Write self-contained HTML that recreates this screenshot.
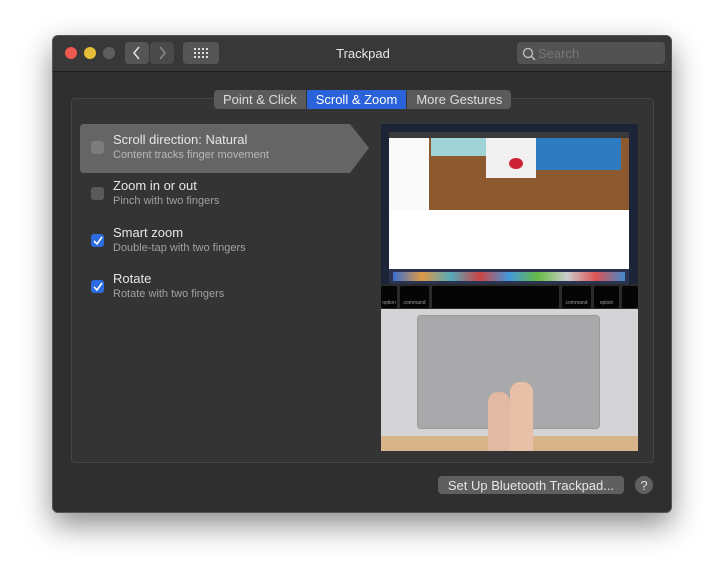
<!DOCTYPE html>
<html><head><meta charset="utf-8"><style>
*{margin:0;padding:0;box-sizing:border-box}
body{width:724px;height:582px;background:#fff;font-family:"Liberation Sans",sans-serif;position:relative;overflow:hidden}
.win{position:absolute;left:52px;top:35px;width:620px;height:478px;background:#2f2f2f;border-radius:6px;border:1px solid #555;box-shadow:0 12px 30px rgba(0,0,0,.45)}
.tb{position:absolute;left:0;top:0;width:100%;height:36px;background:#383838;border-bottom:1px solid #1e1e1e;border-radius:6px 6px 0 0}
.dot{position:absolute;top:11px;width:12px;height:12px;border-radius:50%}
.btn{position:absolute;top:6px;height:22px;background:#555;border-radius:4px}
.t{position:absolute;color:#ddd;font-size:13px}
.grp{position:absolute;left:18px;top:62px;width:583px;height:365px;background:#343434;border:1px solid #444;border-radius:4px}
.tabs{position:absolute;left:161px;top:54px;height:19px;display:flex;font-size:13px;color:#ddd;border-radius:4px;overflow:hidden}
.tabs div{padding:2px 9px 0;background:#5b5b5b;height:19px}
.tabs .on{background:#2a62d9;color:#fff;border-left:1px solid #333;border-right:1px solid #333}
.row{position:absolute;left:28px;width:290px;height:48px}
.cb{position:absolute;left:10px;top:17px;width:13px;height:13px;border-radius:3px;background:#5a5a5a}
.cb.on{background:#2d6ce0}
.h{position:absolute;left:32px;top:8px;color:#e6e6e6;font-size:13px}
.s{position:absolute;left:32px;top:25px;color:#a0a0a0;font-size:11px}
.k{position:absolute;top:162px;height:22px;background:#050505;border-radius:2px;color:#999;font-size:5px;text-align:center;padding-top:14px}
</style></head><body>
<div class="win">
 <div class="tb">
  <div class="dot" style="left:12px;background:#ee5a52"></div>
  <div class="dot" style="left:31px;background:#e6be3a"></div>
  <div class="dot" style="left:50px;background:#5e5e5e"></div>
  <div class="btn" style="left:72px;width:24px"></div>
  <div class="btn" style="left:97px;width:24px;background:#4a4a4a"></div>
  <svg style="position:absolute;left:78px;top:10px" width="12" height="14"><path d="M8 1L3 7l5 6" stroke="#ddd" stroke-width="1.6" fill="none"/></svg>
  <svg style="position:absolute;left:103px;top:10px" width="12" height="14"><path d="M4 1l5 6-5 6" stroke="#888" stroke-width="1.6" fill="none"/></svg>
  <div class="btn" style="left:130px;width:36px"></div>
  <svg style="position:absolute;left:141px;top:12px" width="14" height="10" fill="#ddd"><g><rect x="0" y="0" width="2" height="2"/><rect x="4" y="0" width="2" height="2"/><rect x="8" y="0" width="2" height="2"/><rect x="12" y="0" width="2" height="2"/><rect x="0" y="4" width="2" height="2"/><rect x="4" y="4" width="2" height="2"/><rect x="8" y="4" width="2" height="2"/><rect x="12" y="4" width="2" height="2"/><rect x="0" y="8" width="2" height="2"/><rect x="4" y="8" width="2" height="2"/><rect x="8" y="8" width="2" height="2"/><rect x="12" y="8" width="2" height="2"/></g></svg>
  <div class="t" style="left:0;width:620px;text-align:center;top:10px;font-size:13px;color:#e8e8e8">Trackpad</div>
  <div class="btn" style="left:464px;width:148px;background:#525252"></div>
  <svg style="position:absolute;left:469px;top:11px" width="14" height="14"><circle cx="6" cy="6" r="4.5" stroke="#bbb" stroke-width="1.4" fill="none"/><path d="M9.3 9.3L13 13" stroke="#bbb" stroke-width="1.5"/></svg>
  <div class="t" style="left:485px;top:10px;color:#777">Search</div>
 </div>
 <div class="grp"></div>
 <div class="tabs"><div>Point &amp; Click</div><div class="on">Scroll &amp; Zoom</div><div>More Gestures</div></div>
 <svg style="position:absolute;left:27px;top:88px" width="290" height="50"><path d="M4 0H270L289 24L270 49H4Q0 49 0 45V4Q0 0 4 0Z" fill="#656565"/></svg>
 <div class="row" style="top:88px"><div class="cb" style="background:#7c7c7c"></div><div class="h">Scroll direction: Natural</div><div class="s" style="color:#b8b8b8">Content tracks finger movement</div></div>
 <div class="row" style="top:134px"><div class="cb"></div><div class="h">Zoom in or out</div><div class="s">Pinch with two fingers</div></div>
 <div class="row" style="top:181px"><div class="cb on"></div><svg style="position:absolute;left:12px;top:19px" width="10" height="10"><path d="M1 5l3 3 5-7" stroke="#fff" stroke-width="1.6" fill="none"/></svg><div class="h">Smart zoom</div><div class="s">Double-tap with two fingers</div></div>
 <div class="row" style="top:227px"><div class="cb on"></div><svg style="position:absolute;left:12px;top:19px" width="10" height="10"><path d="M1 5l3 3 5-7" stroke="#fff" stroke-width="1.6" fill="none"/></svg><div class="h">Rotate</div><div class="s">Rotate with two fingers</div></div>
 <div style="position:absolute;left:328px;top:88px;width:257px;height:327px;background:#c8c8c8;overflow:hidden">
  <div style="position:absolute;left:0;top:0;width:257px;height:160px;background:#1c2438"></div>
  <div style="position:absolute;left:8px;top:8px;width:240px;height:137px;background:#fff"></div>
  <div style="position:absolute;left:8px;top:8px;width:240px;height:6px;background:#3a3a3a"></div>
  <div style="position:absolute;left:8px;top:14px;width:240px;height:72px;background:#8c5a2e"></div>
  <div style="position:absolute;left:8px;top:14px;width:40px;height:72px;background:#fafafa"></div>
  <div style="position:absolute;left:50px;top:14px;width:55px;height:18px;background:#9fd3d6"></div>
  <div style="position:absolute;left:105px;top:14px;width:50px;height:40px;background:#f1f1f1"></div>
  <div style="position:absolute;left:155px;top:14px;width:85px;height:32px;background:#2f7bc2"></div>
  <div style="position:absolute;left:128px;top:34px;width:14px;height:11px;border-radius:50%;background:#c23"></div>
  <div style="position:absolute;left:8px;top:145px;width:240px;height:15px;background:#2a3450"></div>
  <div style="position:absolute;left:12px;top:148px;width:232px;height:9px;background:linear-gradient(90deg,#3b6fd0,#d94,#5ab,#c44,#49d,#6b4,#ccc,#d55,#48c)"></div>
  <div style="position:absolute;left:0;top:160px;width:257px;height:25px;background:#2a2a2a"></div>
  <div class="k" style="left:0;width:16px">option</div>
  <div class="k" style="left:19px;width:29px">command</div>
  <div class="k" style="left:51px;width:127px"></div>
  <div class="k" style="left:181px;width:29px">command</div>
  <div class="k" style="left:213px;width:25px">option</div>
  <div class="k" style="left:241px;width:16px"></div>
  <div style="position:absolute;left:0;top:185px;width:257px;height:127px;background:#d4d4d6"></div>
  <div style="position:absolute;left:36px;top:191px;width:183px;height:114px;background:#a9a9ab;border-radius:4px;border:1px solid #999"></div>
  <div style="position:absolute;left:0;top:312px;width:257px;height:15px;background:#d8b48a"></div>
  <div style="position:absolute;left:107px;top:268px;width:22px;height:59px;background:#e2b9a2;border-radius:10px 10px 0 0"></div>
  <div style="position:absolute;left:129px;top:258px;width:23px;height:69px;background:#e8c0a8;border-radius:10px 10px 0 0"></div>
 </div>
 <div style="position:absolute;left:385px;top:440px;width:186px;height:18px;background:#5f5f5f;border-radius:4px;color:#e6e6e6;font-size:13px;text-align:center;padding-top:2px">Set Up Bluetooth Trackpad...</div>
 <div style="position:absolute;left:582px;top:440px;width:18px;height:18px;border-radius:50%;background:#5f5f5f;color:#ddd;font-size:13px;text-align:center;padding-top:2px">?</div>
</div>
</body></html>
